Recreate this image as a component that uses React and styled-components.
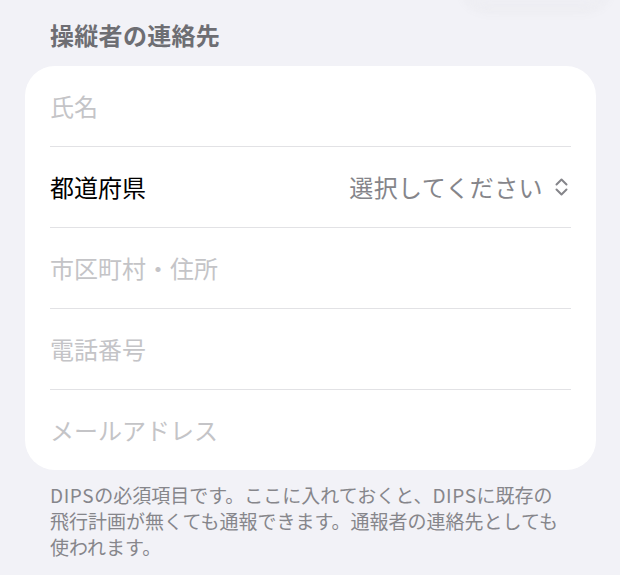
import React from "react";
import styled, { createGlobalStyle } from "styled-components";

const Global = createGlobalStyle`
  html, body { margin: 0; padding: 0; background: #f2f2f7; }
  body {
    font-family: "Noto Sans CJK JP", "Noto Sans", "Liberation Sans", sans-serif;
    -webkit-font-smoothing: antialiased;
  }
`;

const Page = styled.div`
  position: relative;
  width: 620px;
  height: 575px;
  overflow: hidden;
  background: #f2f2f7;
  padding: 20px 24px 0 25px;
  box-sizing: border-box;
`;

const TopShadow = styled.div`
  position: absolute;
  top: -40px;
  right: 14px;
  width: 140px;
  height: 46px;
  border-radius: 20px;
  background: #efeff4;
  box-shadow: 0 2px 14px rgba(0, 0, 0, 0.05);
  filter: blur(4px);
`;

const SectionTitle = styled.h2`
  margin: 0 0 16px;
  padding-left: 25px;
  font-size: 24px;
  line-height: 30px;
  font-weight: 700;
  color: #6e6e73;
  letter-spacing: 0.3px;
`;

const Card = styled.div`
  background: #ffffff;
  border-radius: 30px;
  display: flex;
  flex-direction: column;
`;

const Row = styled.div`
  height: 80px;
  margin: 0 25px;
  display: flex;
  align-items: center;
  justify-content: space-between;
  border-bottom: ${(p) => (p.$last ? "none" : "1px solid #e2e2e5")};
`;

const Label = styled.span`
  font-size: 24px;
  line-height: 30px;
  color: ${(p) => (p.$placeholder ? "#c4c4c7" : "#000000")};
`;

const Picker = styled.div`
  display: flex;
  align-items: center;
  gap: 11px;
  color: #85858a;
  font-size: 24px;
  line-height: 30px;
  letter-spacing: 0.4px;
  margin-right: 2px;
`;

const Footer = styled.p`
  margin: 12px 0 0;
  padding: 0 0 0 25px;
  font-size: 19px;
  line-height: 26px;
  color: #86868b;
  white-space: nowrap;
`;

const Latin = styled.span`
  letter-spacing: 0.6px;
`;

const UpDown = () => (
  <svg width="15" height="20" viewBox="0 0 15 20" fill="none">
    <path d="M2.5 7.5 L7.5 2.5 L12.5 7.5" stroke="#85858a" strokeWidth="2" strokeLinecap="round" strokeLinejoin="round" />
    <path d="M2.5 12.5 L7.5 17.5 L12.5 12.5" stroke="#85858a" strokeWidth="2" strokeLinecap="round" strokeLinejoin="round" />
  </svg>
);

export default function App() {
  return (
    <>
      <Global />
      <Page>
        <TopShadow />
        <SectionTitle>操縦者の連絡先</SectionTitle>
        <Card>
          <Row>
            <Label $placeholder>氏名</Label>
          </Row>
          <Row>
            <Label>都道府県</Label>
            <Picker>
              <span>選択してください</span>
              <UpDown />
            </Picker>
          </Row>
          <Row>
            <Label $placeholder>市区町村・住所</Label>
          </Row>
          <Row>
            <Label $placeholder>電話番号</Label>
          </Row>
          <Row $last>
            <Label $placeholder>メールアドレス</Label>
          </Row>
        </Card>
        <Footer>
          <Latin>DIPS</Latin>の必須項目です。ここに入れておくと、<Latin>DIPS</Latin>に既存の
          <br />
          飛行計画が無くても通報できます。通報者の連絡先としても
          <br />
          使われます。
        </Footer>
      </Page>
    </>
  );
}
